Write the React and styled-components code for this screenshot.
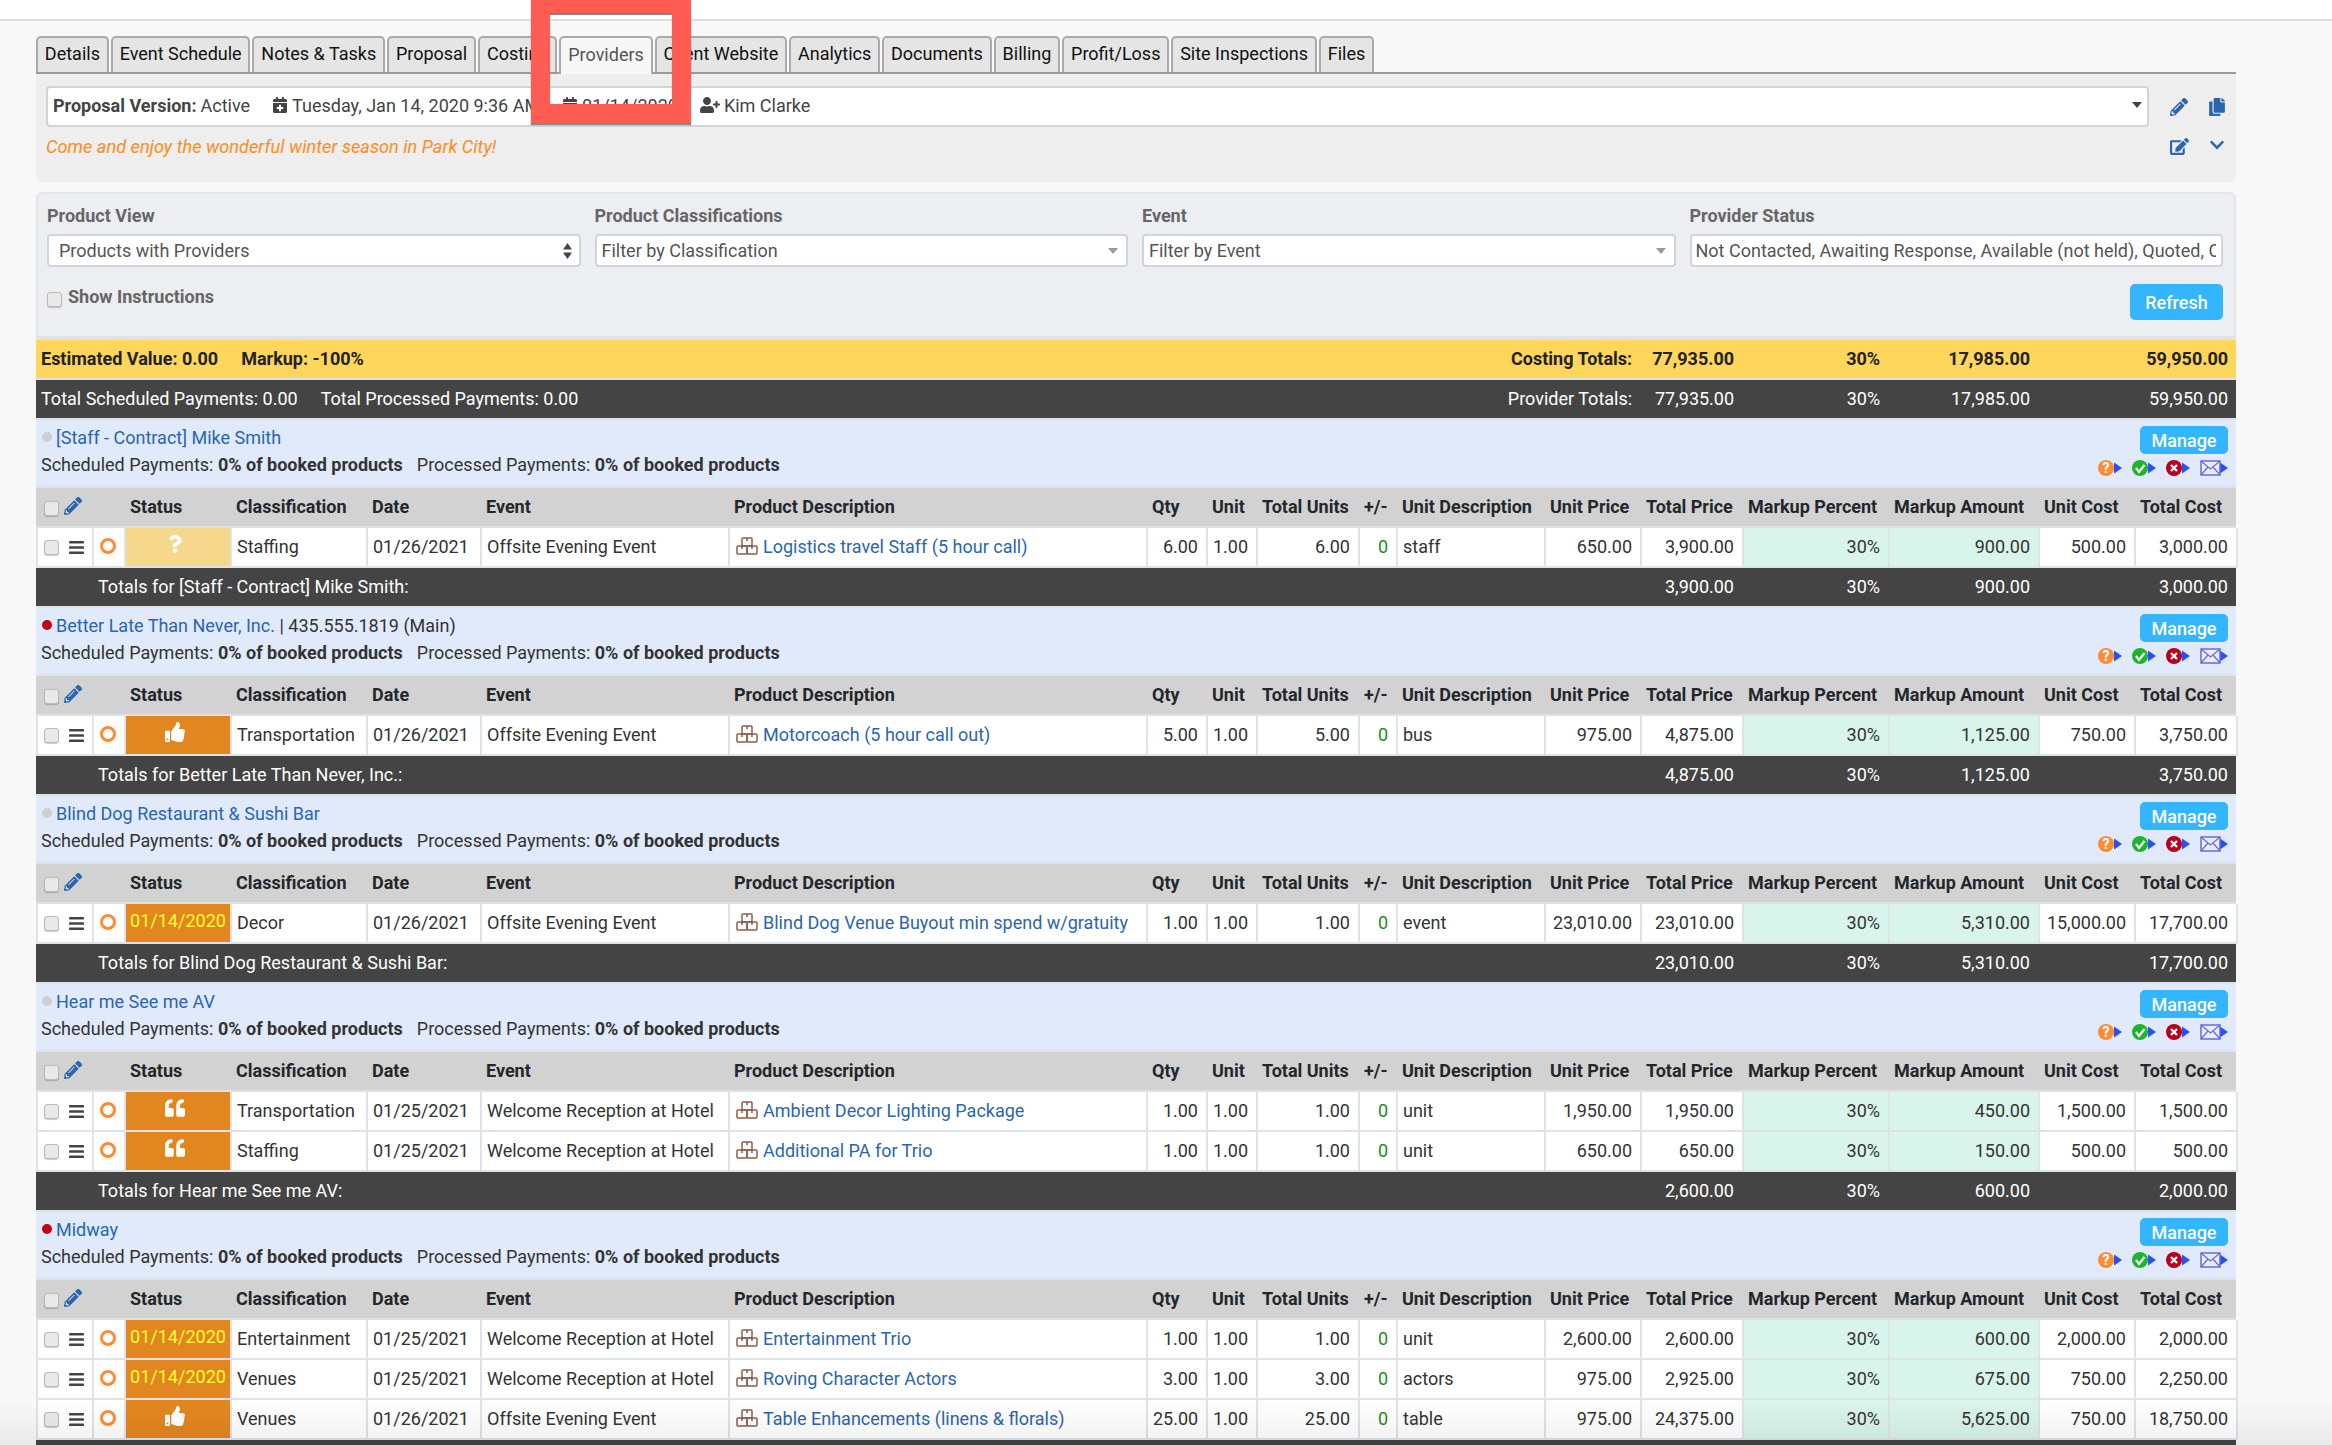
import React from "react";
import styled, { createGlobalStyle } from "styled-components";
import {
  FaPencilAlt, FaCopy, FaEdit, FaChevronDown, FaCalendarPlus, FaCalendarAlt, FaUserPlus,
  FaBars, FaQuestion, FaThumbsUp, FaQuoteLeft,
} from "react-icons/fa";

const Global = createGlobalStyle`
  html, body { margin: 0; padding: 0; background: #f8f8f8; }
  body { font-family: Roboto, "Liberation Sans", sans-serif; font-size: 18px; color: #333; }
  * { box-sizing: border-box; }
`;

const BLUE = "#2a66ae";
const WIDTHS = [56, 32, 106, 136, 114, 248, 418, 60, 50, 102, 38, 148, 96, 102, 146, 150, 96, 102];

const Page = styled.div`
  position: relative;
  width: 2332px;
  height: 1445px;
  overflow: hidden;
  background: #f8f8f8;
`;
const TopStrip = styled.div`
  height: 21px;
  background: #fff;
  border-bottom: 2px solid #dcdce2;
`;
const Main = styled.main`
  width: 2200px;
  margin-left: 36px;
  padding-top: 15px;
`;
const Tabs = styled.nav`
  display: flex;
  gap: 2px;
  height: 38px;
  border-bottom: 2px solid #999;
`;
const Tab = styled.div`
  height: ${(p) => (p.$active ? "38px" : "36px")};
  padding: 0 6.85px 2px;
  display: flex;
  align-items: center;
  background: ${(p) => (p.$active ? "#f7f7f7" : "#e5e5e5")};
  color: ${(p) => (p.$active ? "#555" : "#111")};
  border: 2px solid #aaa;
  border-bottom: none;
  border-radius: 5px 5px 0 0;
  white-space: nowrap;
  line-height: 1;
`;
const ProposalPanel = styled.section`
  height: 108px;
  padding: 12px 0 0 10px;
  background: #eee;
  border-radius: 0 0 6px 6px;
`;
const ProposalRow = styled.div`
  display: flex;
  align-items: center;
  height: ${(p) => p.$h}px;
`;
const VersionBox = styled.div`
  flex: 1;
  height: 41px;
  display: flex;
  align-items: center;
  gap: 22px;
  padding: 0 0 3px 5px;
  background: #fff;
  border: 2px solid #d0d4dc;
  border-radius: 4px;
  color: #444;
`;
const VersionPart = styled.span`
  display: inline-flex;
  align-items: center;
  gap: 4px;
  white-space: nowrap;
  b { font-weight: 700; }
  svg { color: #444; }
`;
const Caret = styled.span`
  margin-left: auto;
  margin-right: 5px;
  width: 0;
  height: 0;
  border-left: 5px solid transparent;
  border-right: 5px solid transparent;
  border-top: 6px solid #444;
`;
const IconCell = styled.span`
  width: 38px;
  display: flex;
  justify-content: center;
  color: ${BLUE};
`;
const IconGroup = styled.div`
  display: flex;
  margin-left: ${(p) => p.$ml || 0}px;
`;
const Slogan = styled.em`
  flex: 1;
  color: #ff8c1a;
  font-style: italic;
  font-size: 18.2px;
`;

const FilterPanel = styled.section`
  margin-top: 10px;
  height: 148px;
  padding: 10px 11px 0 9px;
  background: #edeef2;
  border: 2px solid #e4e5e9;
  border-bottom-width: 4px;
  border-bottom-color: #e1e2e7;
  border-radius: 6px 6px 0 0;
`;
const FilterGrid = styled.div`
  display: grid;
  grid-template-columns: repeat(4, minmax(0, 1fr));
  column-gap: 14px;
`;
const FilterLabel = styled.label`
  display: block;
  height: 30px;
  line-height: 24px;
  font-weight: 700;
  color: #666;
`;
const SelectBox = styled.div`
  height: 33px;
  display: flex;
  align-items: center;
  padding: 0 5px 0 ${(p) => p.$pl || 5}px;
  background: #fff;
  border: 2px solid #d0d4dc;
  border-radius: 4px;
  color: #555;
  white-space: nowrap;
  overflow: hidden;
`;
const SelectText = styled.span`
  flex: 1;
  overflow: hidden;
`;
const SelectTri = styled.span`
  width: 0;
  height: 0;
  margin-right: 3px;
  border-left: 5px solid transparent;
  border-right: 5px solid transparent;
  border-top: 6px solid #999;
`;
const UpDown = styled.svg`
  width: 9px;
  height: 16px;
  margin-right: 2px;
  fill: #444;
`;
const FilterFoot = styled.div`
  margin-top: 17px;
  display: flex;
  justify-content: space-between;
  align-items: flex-start;
`;
const ShowLabel = styled.div`
  display: flex;
  align-items: center;
  gap: 6px;
  padding-top: 1px;
  font-weight: 700;
  color: #666;
  line-height: 24px;
`;
const Check = styled.input.attrs({ type: "checkbox", readOnly: true })`
  appearance: none;
  flex: none;
  width: 15px;
  height: 15px;
  margin: ${(p) => (p.$low ? "4px 0 0" : "0")};
  background: #e9e9e9;
  border: 1px solid #b9b9b9;
  border-radius: 3px;
  box-shadow: 0 1px 1px rgba(0, 0, 0, 0.2);
`;
const BlueButton = styled.button`
  width: ${(p) => p.$w}px;
  height: ${(p) => p.$h}px;
  padding: 0;
  border: none;
  border-radius: 5px;
  background: #33b5ff;
  color: #fff;
  font: 500 18px Roboto, sans-serif;
`;

const Table = styled.table`
  width: 2200px;
  table-layout: fixed;
  border-collapse: separate;
  border-spacing: 0;
  background: #dee3ea;
`;
const BarRow = styled.tr`
  td {
    height: 40px;
    padding: 0 8px 2px 0;
    text-align: right;
    white-space: nowrap;
    background: ${(p) => (p.$tone === "gold" ? "#ffd65c" : "#444")};
    color: ${(p) => (p.$tone === "gold" ? "#222" : "#fff")};
    font-weight: ${(p) => (p.$tone === "gold" ? 700 : 400)};
    border-bottom: 2px solid #dee3ea;
  }
`;
const BarLead = styled.div`
  display: flex;
  justify-content: space-between;
  padding-left: ${(p) => p.$pl || 5}px;
`;
const BarLeft = styled.span`
  display: flex;
  gap: 23px;
`;

const ProviderHead = styled.div`
  height: 68px;
  display: flex;
  justify-content: space-between;
  padding: 5px 8px 0 5px;
  background: #e0eafa;
  border-bottom: 2px solid #dee3ea;
`;
const ProviderName = styled.div`
  display: flex;
  align-items: center;
  height: 24px;
  color: #333;
`;
const Dot = styled.span`
  width: 10px;
  height: 10px;
  margin: 0 4px 0 1px;
  border-radius: 50%;
  background: ${(p) => (p.$on ? "#c40018" : "#cfcfcf")};
`;
const Link = styled.a`
  color: ${BLUE};
  text-decoration: none;
`;
const PayLine = styled.div`
  display: flex;
  margin-top: 4px;
  height: 24px;
  line-height: 24px;
  gap: 14px;
  color: #333;
  b { font-weight: 700; }
`;
const ProviderActions = styled.div`
  padding-top: 1px;
  display: flex;
  flex-direction: column;
  align-items: flex-end;
  gap: 6px;
`;
const ActionIcons = styled.div`
  display: flex;
  gap: 10px;
`;
const Th = styled.th`
  height: 40px;
  padding: 0 0 2px 6px;
  text-align: left;
  font-weight: 700;
  color: #23272b;
  background: #d2d2d2;
  border-bottom: 2px solid #dee3ea;
  white-space: nowrap;
`;
const ThTools = styled.div`
  display: flex;
  align-items: center;
  gap: 5px;
  padding-left: 2px;
  color: ${BLUE};
`;
const Td = styled.td`
  height: 40px;
  padding: ${(p) => (p.$right ? "0 8px 2px 5px" : "0 0 2px 5px")};
  text-align: ${(p) => (p.$right ? "right" : "left")};
  background: ${(p) => (p.$mint ? "#d9f4ea" : "#fff")};
  color: ${(p) => (p.$green ? "#1e8a1e" : "#333")};
  border-left: 2px solid #dee3ea;
  border-bottom: 2px solid #dee3ea;
  white-space: nowrap;
  overflow: hidden;
  &:last-child { box-shadow: 2px 0 0 #dee3ea; overflow: visible; }
`;
const ToolCell = styled.div`
  display: flex;
  align-items: center;
  gap: 9px;
  padding: 2px 0 0 1px;
  color: #444;
`;
const Ring = styled.span`
  display: block;
  width: 16px;
  height: 16px;
  margin-left: 1px;
  border: 3px solid #ff8c33;
  border-radius: 50%;
`;
const StatusTd = styled.td`
  height: 40px;
  padding: 0 0 6px;
  text-align: center;
  color: ${(p) => (p.$tone === "date" ? "#ffff33" : "#fff")};
  background: ${(p) => (p.$tone === "ask" ? "#f6d88c" : "#e28620")};
  border-left: 2px solid #dee3ea;
  border-bottom: 2px solid #dee3ea;
  white-space: nowrap;
  svg { display: block; margin: 0 auto; transform: translateX(-3px); }
`;
const ProductLink = styled.div`
  display: flex;
  align-items: center;
  gap: 5px;
  padding-left: 1px;
`;
const Marker = styled.div`
  position: absolute;
  left: 531px;
  top: 0;
  width: 160px;
  height: 123px;
  border-style: solid;
  border-color: #ff5c54;
  border-width: 13px 19px 19px;
  box-shadow: 0 2px 1px rgba(40, 40, 40, 0.55), inset 0 2px 1px rgba(40, 40, 40, 0.6);
  pointer-events: none;
`;
const BottomFade = styled.div`
  position: absolute;
  left: 0;
  right: 0;
  bottom: 0;
  height: 44px;
  background: linear-gradient(to bottom, rgba(0, 0, 0, 0), rgba(0, 0, 0, 0.06));
  pointer-events: none;
`;

const Cols = () => (
  <colgroup>
    {WIDTHS.map((w, i) => (
      <col key={i} style={{ width: w }} />
    ))}
  </colgroup>
);

const BoxesIcon = () => (
  <svg width="22" height="18" viewBox="0 0 22 18" fill="none" stroke="#8a5d4e" strokeWidth="1.5">
    <rect x="6" y="1" width="10" height="8" rx="1" />
    <rect x="1" y="9" width="10" height="8" rx="1" />
    <rect x="11" y="9" width="10" height="8" rx="1" />
    <path d="M11 1v3M6 9v3M16 9v3" />
  </svg>
);

const Arrow = ({ x = 16 }) => <path d={`M${x} 2.500l8 5.500-8 5.500z`} fill="#2a4dff" />;

const AskIcon = () => (
  <svg width="24" height="16" viewBox="0 0 24 16">
    <Arrow />
    <circle cx="8" cy="8" r="8" fill="#ff8c33" />
    <text x="8" y="13" textAnchor="middle" fontFamily="Roboto, sans-serif" fontWeight="700" fontSize="14" fill="#fff">?</text>
  </svg>
);
const OkIcon = () => (
  <svg width="24" height="16" viewBox="0 0 24 16">
    <Arrow />
    <circle cx="8" cy="8" r="8" fill="#1fb52a" />
    <path d="M4 8l3 4 5.500-7" fill="none" stroke="#fff" strokeWidth="2.200" />
  </svg>
);
const NoIcon = () => (
  <svg width="24" height="16" viewBox="0 0 24 16">
    <Arrow />
    <circle cx="8" cy="8" r="8" fill="#b8001c" />
    <path d="M5 5l6 6M11 5l-6 6" fill="none" stroke="#fff" strokeWidth="2.400" />
  </svg>
);
const MailIcon = () => (
  <svg width="28" height="16" viewBox="0 0 28 16">
    <Arrow x={20} />
    <rect x="1" y="1" width="19" height="14" fill="#e8ecfb" stroke="#6a6adc" strokeWidth="1.500" />
    <path d="M1 1l9.500 8L20 1M1 15l7-8M20 15l-7-8" fill="none" stroke="#6a6adc" strokeWidth="1.200" />
  </svg>
);

const TABS = ["Details", "Event Schedule", "Notes & Tasks", "Proposal", "Costing", "Providers", "Client Website", "Analytics", "Documents", "Billing", "Profit/Loss", "Site Inspections", "Files"];
const HEADERS = ["Classification", "Date", "Event", "Product Description", "Qty", "Unit", "Total Units", "+/-", "Unit Description", "Unit Price", "Total Price", "Markup Percent", "Markup Amount", "Unit Cost", "Total Cost"];
const OFFSITE = "Offsite Evening Event";
const WELCOME = "Welcome Reception at Hotel";

const PROVIDERS = [
  {
    name: "[Staff - Contract] Mike Smith", on: false,
    rows: [["ask", "Staffing", "01/26/2021", OFFSITE, "Logistics travel Staff (5 hour call)", "6.00", "1.00", "6.00", "staff", "650.00", "3,900.00", "900.00", "500.00", "3,000.00"]],
    totals: ["3,900.00", "900.00", "3,000.00"],
  },
  {
    name: "Better Late Than Never, Inc.", extra: "| 435.555.1819 (Main)", on: true,
    rows: [["up", "Transportation", "01/26/2021", OFFSITE, "Motorcoach (5 hour call out)", "5.00", "1.00", "5.00", "bus", "975.00", "4,875.00", "1,125.00", "750.00", "3,750.00"]],
    totals: ["4,875.00", "1,125.00", "3,750.00"],
  },
  {
    name: "Blind Dog Restaurant & Sushi Bar", on: false,
    rows: [["date", "Decor", "01/26/2021", OFFSITE, "Blind Dog Venue Buyout min spend w/gratuity", "1.00", "1.00", "1.00", "event", "23,010.00", "23,010.00", "5,310.00", "15,000.00", "17,700.00"]],
    totals: ["23,010.00", "5,310.00", "17,700.00"],
  },
  {
    name: "Hear me See me AV", on: false,
    rows: [
      ["quote", "Transportation", "01/25/2021", WELCOME, "Ambient Decor Lighting Package", "1.00", "1.00", "1.00", "unit", "1,950.00", "1,950.00", "450.00", "1,500.00", "1,500.00"],
      ["quote", "Staffing", "01/25/2021", WELCOME, "Additional PA for Trio", "1.00", "1.00", "1.00", "unit", "650.00", "650.00", "150.00", "500.00", "500.00"],
    ],
    totals: ["2,600.00", "600.00", "2,000.00"],
  },
  {
    name: "Midway", on: true,
    rows: [
      ["date", "Entertainment", "01/25/2021", WELCOME, "Entertainment Trio", "1.00", "1.00", "1.00", "unit", "2,600.00", "2,600.00", "600.00", "2,000.00", "2,000.00"],
      ["date", "Venues", "01/25/2021", WELCOME, "Roving Character Actors", "3.00", "1.00", "3.00", "actors", "975.00", "2,925.00", "675.00", "750.00", "2,250.00"],
      ["up", "Venues", "01/26/2021", OFFSITE, "Table Enhancements (linens & florals)", "25.00", "1.00", "25.00", "table", "975.00", "24,375.00", "5,625.00", "750.00", "18,750.00"],
    ],
    totals: null,
  },
];

const StatusContent = ({ kind }) => {
  if (kind === "ask") return <FaQuestion size={18} />;
  if (kind === "up") return <FaThumbsUp size={20} />;
  if (kind === "quote") return <FaQuoteLeft size={20} />;
  return "01/14/2020";
};

const ProductRow = ({ r }) => (
  <tr>
    <Td>
      <ToolCell>
        <Check />
        <FaBars size={17} />
      </ToolCell>
    </Td>
    <Td><Ring /></Td>
    <StatusTd $tone={r[0]}><StatusContent kind={r[0]} /></StatusTd>
    <Td>{r[1]}</Td>
    <Td>{r[2]}</Td>
    <Td>{r[3]}</Td>
    <Td>
      <ProductLink>
        <BoxesIcon />
        <Link>{r[4]}</Link>
      </ProductLink>
    </Td>
    <Td $right>{r[5]}</Td>
    <Td $right>{r[6]}</Td>
    <Td $right>{r[7]}</Td>
    <Td $right $green>0</Td>
    <Td>{r[8]}</Td>
    <Td $right>{r[9]}</Td>
    <Td $right>{r[10]}</Td>
    <Td $right $mint>30%</Td>
    <Td $right $mint>{r[11]}</Td>
    <Td $right>{r[12]}</Td>
    <Td $right>{r[13]}</Td>
  </tr>
);

const Provider = ({ p }) => (
  <section>
    <ProviderHead>
      <div>
        <ProviderName>
          <Dot $on={p.on} />
          <Link>{p.name}</Link>
          {p.extra && <span>&nbsp;{p.extra}</span>}
        </ProviderName>
        <PayLine>
          <span>Scheduled Payments: <b>0% of booked products</b></span>
          <span>Processed Payments: <b>0% of booked products</b></span>
        </PayLine>
      </div>
      <ProviderActions>
        <BlueButton $w={88} $h={28}>Manage</BlueButton>
        <ActionIcons>
          <AskIcon />
          <OkIcon />
          <NoIcon />
          <MailIcon />
        </ActionIcons>
      </ProviderActions>
    </ProviderHead>
    <Table>
      <Cols />
      <thead>
        <tr>
          <Th>
            <ThTools>
              <Check $low />
              <FaPencilAlt size={18} />
            </ThTools>
          </Th>
          <Th />
          <Th>Status</Th>
          {HEADERS.map((h) => <Th key={h}>{h}</Th>)}
        </tr>
      </thead>
      <tbody>
        {p.rows.map((r, i) => <ProductRow key={i} r={r} />)}
        <BarRow>
          <td colSpan={13}>{p.totals && <BarLead $pl={62}>Totals for {p.name}:</BarLead>}</td>
          <td>{p.totals && p.totals[0]}</td>
          <td>{p.totals && "30%"}</td>
          <td>{p.totals && p.totals[1]}</td>
          <td />
          <td>{p.totals && p.totals[2]}</td>
        </BarRow>
      </tbody>
    </Table>
  </section>
);

export default function App() {
  return (
    <Page>
      <Global />
      <TopStrip />
      <Main>
        <Tabs>
          {TABS.map((t) => <Tab key={t} $active={t === "Providers"}>{t}</Tab>)}
        </Tabs>
        <ProposalPanel>
          <ProposalRow $h={41}>
            <VersionBox>
              <VersionPart><b>Proposal Version:</b>Active</VersionPart>
              <VersionPart><FaCalendarPlus size={16} />Tuesday, Jan 14, 2020 9:36 AM</VersionPart>
              <VersionPart><FaCalendarAlt size={16} />01/14/2020</VersionPart>
              <VersionPart><FaUserPlus size={20} />Kim Clarke</VersionPart>
              <Caret />
            </VersionBox>
            <IconGroup $ml={11}>
              <IconCell><FaPencilAlt size={18} /></IconCell>
              <IconCell><FaCopy size={18} /></IconCell>
            </IconGroup>
          </ProposalRow>
          <ProposalRow $h={38}>
            <Slogan>Come and enjoy the wonderful winter season in Park City!</Slogan>
            <IconGroup>
              <IconCell><FaEdit size={19} /></IconCell>
              <IconCell><FaChevronDown size={16} /></IconCell>
            </IconGroup>
          </ProposalRow>
        </ProposalPanel>
        <FilterPanel>
          <FilterGrid>
            <div>
              <FilterLabel>Product View</FilterLabel>
              <SelectBox $pl={10}>
                <SelectText>Products with Providers</SelectText>
                <UpDown viewBox="0 0 9 16"><path d="M4.500 0L9 6.500H0zM4.500 16L0 9.500h9z" /></UpDown>
              </SelectBox>
            </div>
            <div>
              <FilterLabel>Product Classifications</FilterLabel>
              <SelectBox>
                <SelectText>Filter by Classification</SelectText>
                <SelectTri />
              </SelectBox>
            </div>
            <div>
              <FilterLabel>Event</FilterLabel>
              <SelectBox>
                <SelectText>Filter by Event</SelectText>
                <SelectTri />
              </SelectBox>
            </div>
            <div>
              <FilterLabel>Provider Status</FilterLabel>
              <SelectBox $pl={4}>
                <SelectText>Not Contacted, Awaiting Response, Available (not held), Quoted, Contracted</SelectText>
              </SelectBox>
            </div>
          </FilterGrid>
          <FilterFoot>
            <ShowLabel><Check $low />Show Instructions</ShowLabel>
            <BlueButton $w={93} $h={36}>Refresh</BlueButton>
          </FilterFoot>
        </FilterPanel>
        <Table>
          <Cols />
          <tbody>
            <BarRow $tone="gold">
              <td colSpan={13}>
                <BarLead>
                  <BarLeft><span>Estimated Value: 0.00</span><span>Markup: -100%</span></BarLeft>
                  <span>Costing Totals:</span>
                </BarLead>
              </td>
              <td>77,935.00</td>
              <td>30%</td>
              <td>17,985.00</td>
              <td />
              <td>59,950.00</td>
            </BarRow>
            <BarRow>
              <td colSpan={13}>
                <BarLead>
                  <BarLeft><span>Total Scheduled Payments: 0.00</span><span>Total Processed Payments: 0.00</span></BarLeft>
                  <span>Provider Totals:</span>
                </BarLead>
              </td>
              <td>77,935.00</td>
              <td>30%</td>
              <td>17,985.00</td>
              <td />
              <td>59,950.00</td>
            </BarRow>
          </tbody>
        </Table>
        {PROVIDERS.map((p) => <Provider key={p.name} p={p} />)}
      </Main>
      <Marker />
      <BottomFade />
    </Page>
  );
}
